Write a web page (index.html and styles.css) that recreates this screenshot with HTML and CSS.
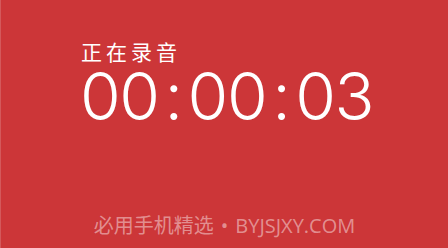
FILE: index.html
```html
<!DOCTYPE html>
<html lang="zh">
<head>
<meta charset="utf-8">
<link rel="stylesheet" href="styles.css">
</head>
<body>
<div class="screen">
  <div class="recorder">
    <div class="label">正在录音</div>
    <div class="timer">00<span class="sep">:</span>00<span class="sep">:</span>03</div>
  </div>
  <div class="footer">必用手机精选<span class="dot">•</span>BYJSJXY.COM</div>
</div>
</body>
</html>
```

FILE: styles.css
```css
html, body {
  margin: 0;
  padding: 0;
}
body {
  width: 448px;
  height: 248px;
  overflow: hidden;
  background: #cc3638;
}
.screen {
  box-sizing: border-box;
  height: 248px;
  display: flex;
  flex-direction: column;
  align-items: center;
  border-left: 1px solid #d4595b;
  color: #fff;
}
.recorder {
  margin-top: 40px;
  display: flex;
  flex-direction: column;
  align-items: flex-start;
  margin-left: 4px;
}
.label {
  font-family: "Noto Sans CJK SC", sans-serif;
  font-size: 21px;
  line-height: 22px;
  letter-spacing: 4px;
  padding-left: 1px;
}
.timer {
  font-family: Inter, Roboto, sans-serif;
  font-weight: 300;
  font-size: 66px;
  line-height: 66px;
  letter-spacing: -1.5px;
  white-space: nowrap;
  margin-top: 1px;
}
.sep {
  display: inline-block;
  padding: 0 6px;
}
.footer {
  margin-top: auto;
  margin-bottom: 8px;
  font-family: "Open Sans", "Noto Sans CJK SC", sans-serif;
  font-size: 20px;
  line-height: 28px;
  color: rgba(255, 255, 255, 0.45);
}
.dot {
  padding: 0 7px;
}
```
